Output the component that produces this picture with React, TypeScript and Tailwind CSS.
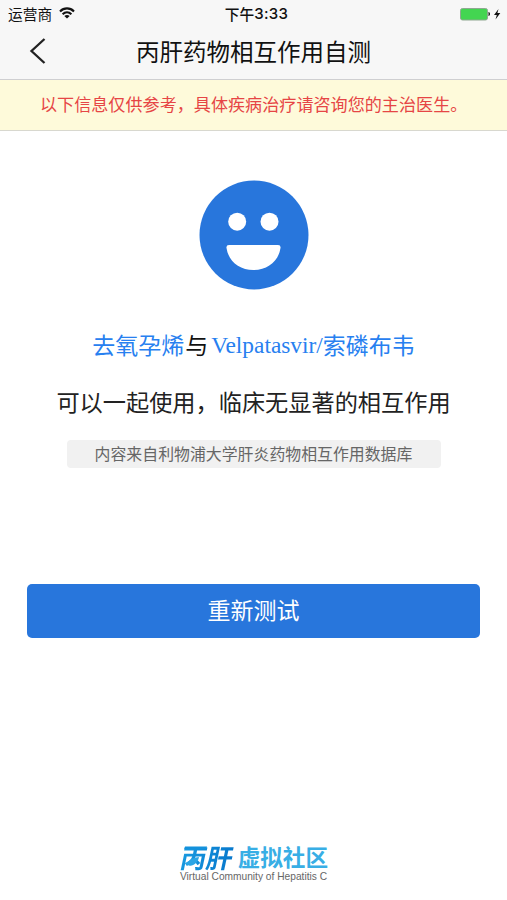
import React from "react";

function StatusBar() {
  return (
    <div className="grid h-[27px] grid-cols-3 items-center pr-[6px] pl-[8px] text-[14.7px] leading-[27px] text-[#111]">
      <div className="flex items-center gap-[7px]">
        <span>运营商</span>
        <svg className="mb-[2px] h-[12px] w-[16px]" viewBox="0 0 16 12" fill="none" stroke="#111" strokeWidth="2.100">
          <path d="M1 4.4C5 .4 11 .4 15 4.4" />
          <path d="M3.6 7.2C6.2 4.8 9.8 4.8 12.4 7.2" />
          <path d="M8 11.6 5.3 9C7 7.5 9 7.5 10.7 9Z" fill="#111" stroke="none" />
        </svg>
      </div>
      <div className="flex items-center justify-center pl-[4px] font-medium">
        下午<span className="font-['Inter',sans-serif] text-[15px] tracking-[0.3px]">3:33</span>
      </div>
      <div className="flex items-center justify-end">
        <svg className="h-[14px] w-[42px]" viewBox="0 0 42 14">
          <rect x="1.5" y="1.5" width="27" height="11.500" rx="2" fill="#43d551" stroke="#8fa891" />
          <path d="M29.5 5h.5q2 2 0 4h-.5z" fill="#111" />
          <path d="M39.500 2 35 8h2.800L36.500 12.500 41.300 6h-2.900z" fill="#111" />
        </svg>
      </div>
    </div>
  );
}

function Smiley() {
  return (
    <svg className="size-[110px]" viewBox="0 0 110 110">
      <circle cx="55" cy="55" r="54.5" fill="#2876dc" />
      <circle cx="38.200" cy="41.7" r="9" fill="#fff" />
      <circle cx="70.500" cy="41.7" r="9" fill="#fff" />
      <path d="M30 65H79Q82 65 81.500 68C79.500 81.500 68.500 90 54.500 90S29.500 81.500 27.500 68Q27 65 30 65Z" fill="#fff" />
    </svg>
  );
}

function Logo() {
  return (
    <div className="flex w-[148px] flex-col">
      <div className="flex h-[25px] items-center justify-between leading-[25px]">
        <div className="relative flex h-[25px] items-center pl-[1px]">
          <span className="inline-block -skew-x-12 bg-linear-to-r from-[#1799e0] to-[#0878cc] bg-clip-text text-[26px] leading-[38px] font-bold text-transparent">
            丙肝
          </span>
          <svg className="absolute top-0 left-0 h-[25px] w-[27px]" viewBox="0 0 27 25">
            <path d="M5 2.500H27L26.400 5H4.300Z" fill="#1391dc" />
            <path d="M5 19C9 18 10 14 19 13 18 19 13 22.500 9 21.500 7 21 6 20 5 19Z" fill="#2ba5e5" />
          </svg>
        </div>
        <span className="text-[22.6px] font-bold text-[#38aee5]">虚拟社区</span>
      </div>
      <div className="h-[13px] font-['Liberation_Sans',sans-serif] text-[10.2px] leading-[15px] whitespace-nowrap text-[#666]">
        Virtual Community of Hepatitis C
      </div>
    </div>
  );
}

export default function App() {
  return (
    <div className="flex h-[900px] w-[507px] flex-col bg-white font-['Noto_Sans_CJK_SC',sans-serif]">
      <header className="h-[80px] border-b border-[#cfcfd1] bg-[#f7f7f7]">
        <StatusBar />
        <div className="grid h-[49px] grid-cols-[60px_1fr_60px] items-center">
          <button className="pb-[2px] pl-[29px]" aria-label="返回">
            <svg className="h-[28px] w-[18px]" viewBox="0 0 18 28" fill="none" stroke="#222" strokeWidth="2.300">
              <path d="M15.500 2 2.500 14l13 12" />
            </svg>
          </button>
          <h1 className="text-center text-[23.5px] leading-[49px] text-[#111]">丙肝药物相互作用自测</h1>
        </div>
      </header>
      <p className="h-[51px] border-b border-[#d8d8cf] bg-[#fefada] pl-[40px] text-[17.1px] leading-[47px] whitespace-nowrap text-[#e64545]">
        以下信息仅供参考，具体疾病治疗请咨询您的主治医生。
      </p>
      <main className="flex flex-1 flex-col items-center pt-[49px]">
        <Smiley />
        <h2 className="mt-[36px] flex h-[36px] items-center text-[23px] leading-[36px] whitespace-nowrap text-[#2780f0]">
          <span>去氧孕烯</span>
          <span className="mr-[3px] ml-[1px] text-[#111]">与</span>
          <span className="pt-[2px] font-['Liberation_Serif',serif] text-[23.4px]">Velpatasvir/</span>
          <span>索磷布韦</span>
        </h2>
        <p className="mt-[21px] text-[23.2px] leading-[36px] whitespace-nowrap text-[#222]">可以一起使用，临床无显著的相互作用</p>
        <p className="mt-[21px] h-[28px] w-[374px] rounded-[4px] bg-[#f1f1f1] text-center text-[15.9px] leading-[28px] text-[#666]">
          内容来自利物浦大学肝炎药物相互作用数据库
        </p>
        <button className="mt-[116px] h-[54px] w-[453px] rounded-[5px] bg-[#2876dc] pb-[4px] text-[23px] leading-[50px] text-white">
          重新测试
        </button>
        <footer className="mt-auto mb-[18px] ml-[1px]">
          <Logo />
        </footer>
      </main>
    </div>
  );
}
